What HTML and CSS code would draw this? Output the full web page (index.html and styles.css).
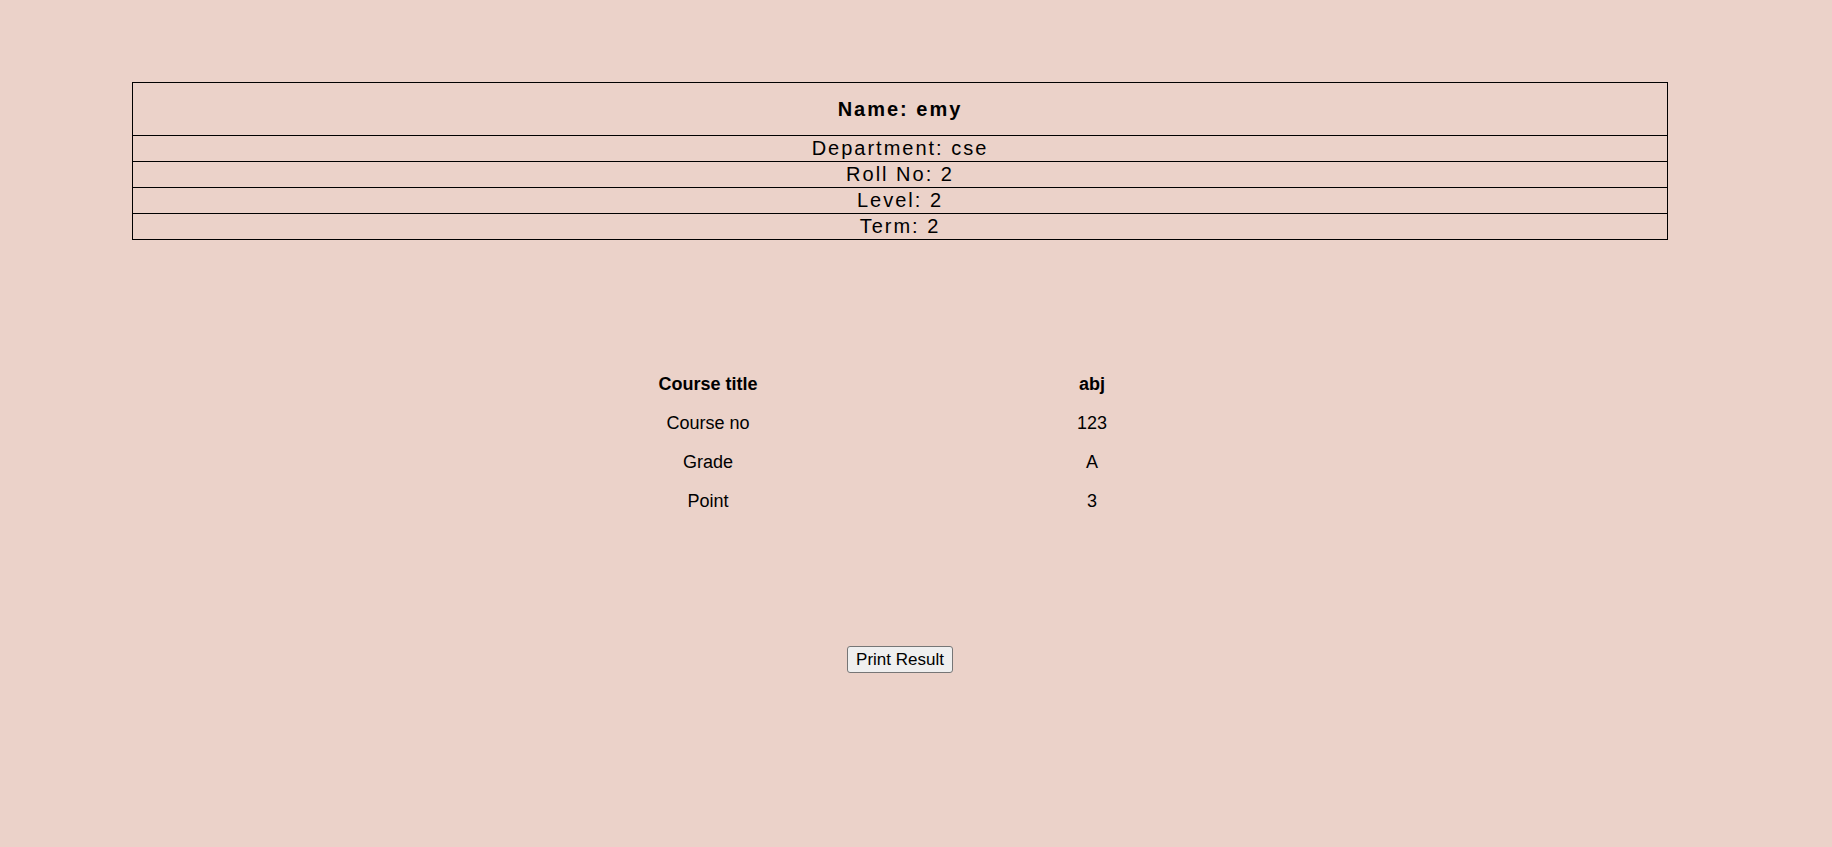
FILE: index.html
```html
<!DOCTYPE html>
<html>
<head>
<meta charset="utf-8">
<title>Result</title>
<link rel="stylesheet" href="styles.css">
</head>
<body>
<div class="page">
  <table class="info">
    <tr><th class="name-cell">Name: emy</th></tr>
    <tr><td>Department: cse</td></tr>
    <tr><td>Roll No: 2</td></tr>
    <tr><td>Level: 2</td></tr>
    <tr><td>Term: 2</td></tr>
  </table>

  <table class="courses">
    <tr><th>Course title</th><th>abj</th></tr>
    <tr><td>Course no</td><td>123</td></tr>
    <tr><td>Grade</td><td>A</td></tr>
    <tr><td>Point</td><td>3</td></tr>
  </table>

  <div class="actions">
    <button class="print-btn" type="button">Print Result</button>
  </div>
</div>
</body>
</html>
```

FILE: styles.css
```css
html, body {
  margin: 0;
  padding: 0;
  background: #ebd2c9;
}

body {
  font-family: "Liberation Sans", Arial, sans-serif;
  color: #000;
}

.page {
  width: 1800px;
  padding-top: 82px;
}

.info {
  width: 1536px;
  margin: 0 auto;
  border-collapse: collapse;
  border: 1px solid #000;
}

.info th,
.info td {
  border: 1px solid #000;
  text-align: center;
  font-size: 20px;
  line-height: 23px;
  letter-spacing: 2px;
  padding: 1px;
}

.info .name-cell {
  font-weight: bold;
  padding: 15px 1px 14px;
}

.courses {
  width: 768px;
  margin: 125px auto 0;
  border-collapse: collapse;
}

.courses th,
.courses td {
  width: 50%;
  text-align: center;
  font-size: 18px;
  line-height: 21px;
  padding: 9px 0;
}

.courses th {
  font-weight: bold;
}

.actions {
  display: flex;
  justify-content: center;
  margin-top: 125px;
}

.print-btn {
  font-family: "Liberation Sans", Arial, sans-serif;
  font-size: 17px;
  line-height: 21px;
  color: #000;
  background: #efefef;
  border: 1px solid #767676;
  border-radius: 3px;
  padding: 2px 8px;
  height: 27px;
}
```
